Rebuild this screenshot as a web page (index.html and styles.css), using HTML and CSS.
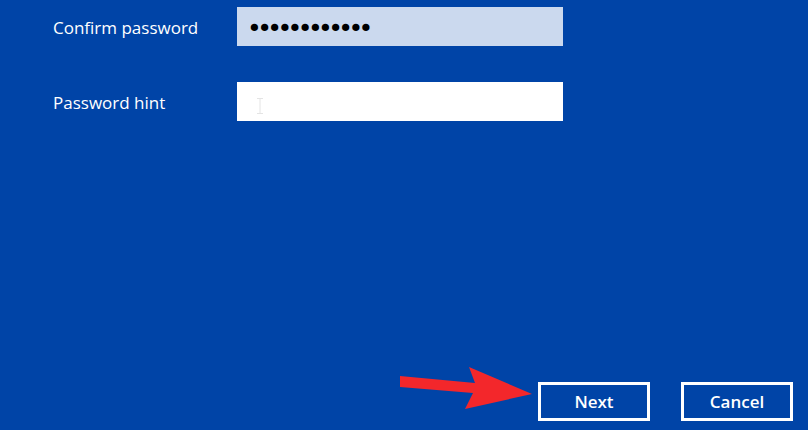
FILE: index.html
```html
<!DOCTYPE html>
<html lang="en">
<head>
  <meta charset="UTF-8">
  <meta name="viewport" content="width=device-width, initial-scale=1.0">
  <title>Create a password</title>
  <link rel="stylesheet" href="styles.css">
</head>
<body>
  <div class="page">
    <form class="form" id="passwordForm">
      <div class="form-row">
        <label for="confirm">Confirm password</label>
        <input class="field filled" type="password" id="confirm" name="confirm" value="abcdefghijkl" readonly>
      </div>
      <div class="form-row">
        <label for="hint">Password hint</label>
        <div class="field-wrap">
          <input class="field" type="text" id="hint" name="hint">
          <svg class="ibeam" width="6" height="16" viewBox="0 0 6 16">
            <path d="M0 0.5h6M0 15.5h6M3 0.5v15" stroke="#e4e4e4" stroke-width="1" fill="none"/>
          </svg>
        </div>
      </div>
    </form>

    <div class="actions">
      <button type="button" class="btn">Next</button>
      <button type="button" class="btn">Cancel</button>
    </div>

    <svg class="arrow" width="140" height="50" viewBox="395 362 140 50">
      <polygon points="400,376 475,383 469,367 532,394 465,409 473,393 400,387" fill="#f3272b"/>
    </svg>
  </div>
</body>
</html>
```

FILE: styles.css
```css
body {
  margin: 0;
  padding: 0;
  background-color: #0044a7;
  font-family: "Open Sans", "Noto Sans", sans-serif;
  color: #fff;
}
.page {
  position: relative;
  height: 430px;
  display: flex;
  flex-direction: column;
  justify-content: space-between;
  overflow: hidden;
}
.form {
  padding-top: 7px;
  display: flex;
  flex-direction: column;
  gap: 36px;
}
.form-row {
  display: flex;
  align-items: flex-start;
}
.form-row label {
  width: 184px;
  padding-left: 53px;
  font-size: 17px;
  line-height: 41px;
  margin-bottom: -2px;
}
.field-wrap {
  position: relative;
}
.field {
  display: block;
  box-sizing: border-box;
  width: 326px;
  height: 39px;
  margin: 0;
  padding: 0 12px;
  border: none;
  outline: none;
  background: #fff;
  font-family: "DejaVu Sans", sans-serif;
  font-size: 16px;
}
.field.filled {
  background: #cbd9ee;
  color: #000;
  font-size: 25px;
  letter-spacing: -4.6px;
  padding: 3px 0 0 10px;
}
.ibeam {
  position: absolute;
  left: 20px;
  top: 16px;
}
.actions {
  display: flex;
  justify-content: flex-end;
  gap: 31px;
  padding: 0 15px 9px 0;
}
.btn {
  box-sizing: border-box;
  width: 112px;
  height: 39px;
  background: transparent;
  border: 3px solid #fff;
  color: #fff;
  font-family: "Open Sans", "Noto Sans", sans-serif;
  font-size: 17px;
  font-weight: 600;
  cursor: pointer;
}
.btn:hover {
  background-color: #1a5bb8;
}
.arrow {
  position: absolute;
  left: 395px;
  top: 362px;
}
```
